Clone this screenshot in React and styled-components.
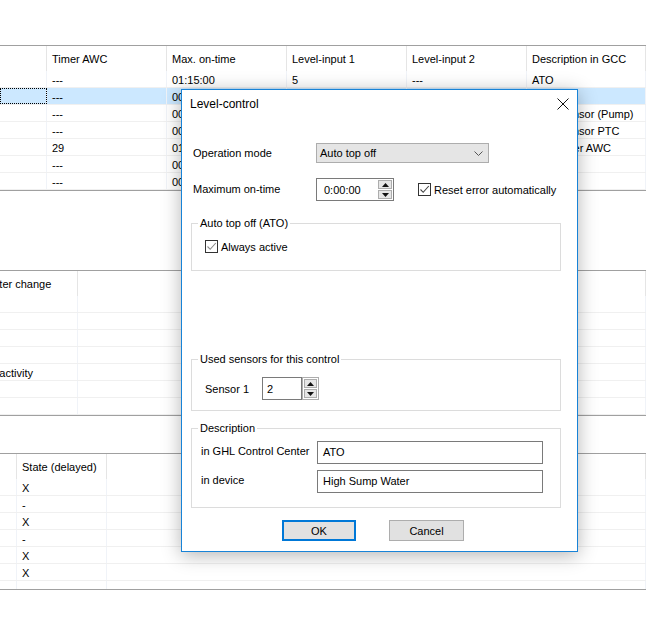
import React from 'react';
import styled, { createGlobalStyle } from 'styled-components';

const GlobalStyle = createGlobalStyle`
  html, body { margin: 0; padding: 0; background: #fff; }
  body {
    font-family: "Liberation Sans", Arial, sans-serif;
    font-size: 11px;
    color: #000;
  }
  * { box-sizing: border-box; }
`;

const Screen = styled.div`
  position: relative;
  width: 646px;
  height: 618px;
  overflow: hidden;
  padding-top: 45px;
  background: #fff;
`;

/* ---------- list views behind the dialog ---------- */

const ListView = styled.div`
  height: ${(p) => p.$height}px;
  margin-top: ${(p) => p.$gap || 0}px;
  border-top: 1px solid #a0a0a0;
  border-bottom: 1px solid #a0a0a0;
  overflow: hidden;
`;

const ListScroll = styled.div`
  margin-left: ${(p) => -(p.$scroll || 0)}px;
`;

const HeaderRow = styled.div`
  display: flex;
  height: 25px;
`;

const HeaderCell = styled.div`
  flex: ${(p) => (p.$w ? `0 0 ${p.$w}px` : '1 1 auto')};
  display: flex;
  align-items: center;
  padding-left: 5px;
  border-right: 1px solid #e5e5e5;
  white-space: nowrap;
  overflow: hidden;
  min-width: 0;
`;

const Row = styled.div`
  display: flex;
  height: 17px;
  border-bottom: 1px solid #f0f0f0;
  background: ${(p) => (p.$selected ? '#cce8ff' : 'transparent')};
`;

const Cell = styled.div`
  flex: ${(p) => (p.$w ? `0 0 ${p.$w}px` : '1 1 auto')};
  padding-left: 5px;
  line-height: 18px;
  border-right: 1px solid #f0f3f8;
  white-space: nowrap;
  overflow: hidden;
  min-width: 0;
  ${(p) => p.$focus && 'outline: 1px dotted #000; outline-offset: -1px;'}
`;

const List = ({ columns, rows, height, gap, scroll, selected, focusCol }) => (
  <ListView $height={height} $gap={gap}>
    <ListScroll $scroll={scroll}>
      <HeaderRow>
        {columns.map((c, i) => (
          <HeaderCell key={i} $w={c.w}>{c.title}</HeaderCell>
        ))}
      </HeaderRow>
      {rows.map((r, ri) => (
        <Row key={ri} $selected={ri === selected}>
          {columns.map((c, ci) => (
            <Cell key={ci} $w={c.w} $focus={ri === selected && ci === focusCol}>
              {r[ci] || ''}
            </Cell>
          ))}
        </Row>
      ))}
    </ListScroll>
  </ListView>
);

const controlColumns = [
  { w: 47, title: '' },
  { w: 120, title: 'Timer AWC' },
  { w: 120, title: 'Max. on-time' },
  { w: 120, title: 'Level-input 1' },
  { w: 120, title: 'Level-input 2' },
  { w: 0, title: 'Description in GCC' },
];

const controlRows = [
  ['', '---', '01:15:00', '5', '---', 'ATO'],
  ['', '---', '00:00:00', '2', '---', ''],
  ['', '---', '00:00:00', '3', '---', 'Level sensor (Pump)'],
  ['', '---', '00:00:00', '4', '---', 'Level sensor PTC'],
  ['', '29', '01:00:00', '6', '---', 'Flowmeter AWC'],
  ['', '---', '00:00:00', '---', '---', ''],
  ['', '---', '00:00:00', '---', '---', ''],
];

const eventColumns = [
  { w: 124, title: 'After water change' },
  { w: 0, title: '' },
];

const eventRows = [[], [], [], [], ['Pump inactivity'], [], []];

const stateColumns = [
  { w: 17, title: '' },
  { w: 90, title: 'State (delayed)' },
  { w: 0, title: '' },
];

const stateRows = [['', 'X'], ['', '-'], ['', 'X'], ['', '-'], ['', 'X'], ['', 'X'], []];

/* ---------- dialog ---------- */

const Dialog = styled.div`
  position: absolute;
  left: 181px;
  top: 89px;
  width: 397px;
  height: 463px;
  border: 1px solid #1883d7;
  background: #fff;
  box-shadow: 0 3px 18px rgba(0, 0, 0, 0.3);
  display: flex;
  flex-direction: column;
`;

const TitleBar = styled.div`
  height: 29px;
  padding: 0 8px 1px 8px;
  display: flex;
  align-items: center;
  justify-content: space-between;
  font-size: 12px;
`;

const Body = styled.div`
  padding-left: 9px;
  display: flex;
  flex-direction: column;
`;

const FormRow = styled.div`
  display: flex;
  align-items: center;
  height: ${(p) => p.$h}px;
  margin-top: ${(p) => p.$gap || 0}px;
`;

const Label = styled.div`
  flex: 0 0 ${(p) => p.$w}px;
  padding-left: ${(p) => p.$pad || 0}px;
  padding-bottom: ${(p) => p.$lift || 0}px;
  white-space: nowrap;
`;

const Combo = styled.div`
  width: 173px;
  height: 20px;
  background: #e5e5e5;
  border: 1px solid #adadad;
  display: flex;
  align-items: center;
  justify-content: space-between;
  padding: 0 5px 0 3px;
`;

const SpinBox = styled.div`
  width: ${(p) => p.$w}px;
  height: 23px;
  display: flex;
  border: ${(p) => (p.$split ? 'none' : '1px solid #7a7a7a')};
  padding: ${(p) => (p.$split ? '0' : '1px 1px 1px 0')};
  background: #fff;
`;

const SpinText = styled.div`
  flex: 1;
  display: flex;
  align-items: center;
  padding-left: ${(p) => (p.$split ? 4 : 7)}px;
  border: ${(p) => (p.$split ? '1px solid #7a7a7a' : 'none')};
`;

const SpinButtons = styled.div`
  flex: 0 0 ${(p) => (p.$split ? 17 : 14)}px;
  display: flex;
  flex-direction: column;
  border: ${(p) => (p.$split ? '1px solid #adadad' : 'none')};
  padding: ${(p) => (p.$split ? '1px' : '0')};
  gap: 1px;
`;

const SpinButton = styled.div`
  flex: 1;
  background: #e6e6e6;
  border: 1px solid #adadad;
  display: flex;
  align-items: center;
  justify-content: center;
`;

const CheckLabel = styled.label`
  display: flex;
  align-items: center;
  gap: 3px;
  margin-left: ${(p) => p.$offset || 0}px;
  white-space: nowrap;
`;

const CheckBox = styled.span`
  width: 13px;
  height: 13px;
  border: 1px solid #333;
  background: #fff;
  display: flex;
  align-items: center;
  justify-content: center;
`;

const Group = styled.div`
  position: relative;
  width: 370px;
  height: ${(p) => p.$h}px;
  margin-top: ${(p) => p.$gap}px;
  border: 1px solid #dcdcdc;
  padding: ${(p) => p.$pad};
  display: flex;
  flex-direction: column;
`;

const Legend = styled.span`
  position: absolute;
  top: -8px;
  left: 6px;
  padding: 0 2px;
  line-height: 14px;
  background: #fff;
  white-space: nowrap;
`;

const Edit = styled.div`
  width: 226px;
  height: 23px;
  border: 1px solid #7a7a7a;
  display: flex;
  align-items: center;
  padding: 0 0 1px 5px;
`;

const ButtonRow = styled.div`
  display: flex;
  margin-top: 12px;
  padding-left: 91px;
  gap: 33px;
`;

const Button = styled.div`
  width: ${(p) => p.$w}px;
  height: 21px;
  background: #e1e1e1;
  border: ${(p) => (p.$default ? '2px solid #0078d7' : '1px solid #adadad')};
  display: flex;
  align-items: center;
  justify-content: center;
`;

const Arrow = ({ up }) => (
  <svg width="7" height="4" viewBox="0 0 7 4">
    <path d={up ? 'M0 4 L3.5 0 L7 4 Z' : 'M0 0 L3.5 4 L7 0 Z'} fill="#111" />
  </svg>
);

const Check = ({ dim }) => (
  <svg width="11" height="11" viewBox="0 0 11 11">
    <path d="M1.5 5.5 L4.2 8.3 L9.8 2" fill="none" stroke={dim ? '#8a8a8a' : '#444'} strokeWidth="1.1" />
  </svg>
);

const Spin = ({ value, w, split }) => (
  <SpinBox $w={w} $split={split}>
    <SpinText $split={split}>{value}</SpinText>
    <SpinButtons $split={split}>
      <SpinButton><Arrow up /></SpinButton>
      <SpinButton><Arrow /></SpinButton>
    </SpinButtons>
  </SpinBox>
);

const LevelControlDialog = () => (
  <Dialog>
    <TitleBar>
      <span>Level-control</span>
      <svg width="12" height="12" viewBox="0 0 12 12">
        <path d="M0.5 0.5 L11.5 11.5 M11.5 0.5 L0.5 11.5" stroke="#111" strokeWidth="1" />
      </svg>
    </TitleBar>
    <Body>
      <FormRow $h={20} $gap={24}>
        <Label $w={125} $pad={2}>Operation mode</Label>
        <Combo>
          <span>Auto top off</span>
          <svg width="9" height="5" viewBox="0 0 9 5">
            <path d="M0.5 0.5 L4.5 4.5 L8.5 0.5" fill="none" stroke="#555" strokeWidth="1" />
          </svg>
        </Combo>
      </FormRow>
      <FormRow $h={23} $gap={15}>
        <Label $w={125} $pad={2} $lift={2}>Maximum on-time</Label>
        <Spin value="0:00:00" w={78} />
        <CheckLabel $offset={24}>
          <CheckBox><Check /></CheckBox>
          Reset error automatically
        </CheckLabel>
      </FormRow>

      <Group $h={48} $gap={22} $pad="16px 0 0 13px">
        <Legend>Auto top off (ATO)</Legend>
        <CheckLabel>
          <CheckBox><Check dim /></CheckBox>
          Always active
        </CheckLabel>
      </Group>

      <Group $h={52} $gap={88} $pad="17px 0 0 13px">
        <Legend>Used sensors for this control</Legend>
        <FormRow $h={23}>
          <Label $w={57}>Sensor 1</Label>
          <Spin value="2" w={57} split />
        </FormRow>
      </Group>

      <Group $h={80} $gap={17} $pad="12px 0 0 9px">
        <Legend>Description</Legend>
        <FormRow $h={23}>
          <Label $w={116} $lift={3}>in GHL Control Center</Label>
          <Edit>ATO</Edit>
        </FormRow>
        <FormRow $h={23} $gap={6}>
          <Label $w={116} $lift={4}>in device</Label>
          <Edit>High Sump Water</Edit>
        </FormRow>
      </Group>

      <ButtonRow>
        <Button $w={74} $default>OK</Button>
        <Button $w={75}>Cancel</Button>
      </ButtonRow>
    </Body>
  </Dialog>
);

const App = () => (
  <Screen>
    <GlobalStyle />
    <List columns={controlColumns} rows={controlRows} height={146} selected={1} focusCol={0} />
    <List columns={eventColumns} rows={eventRows} height={146} gap={79} scroll={46} />
    <List columns={stateColumns} rows={stateRows} height={137} gap={37} />
    <LevelControlDialog />
  </Screen>
);

export default App;
